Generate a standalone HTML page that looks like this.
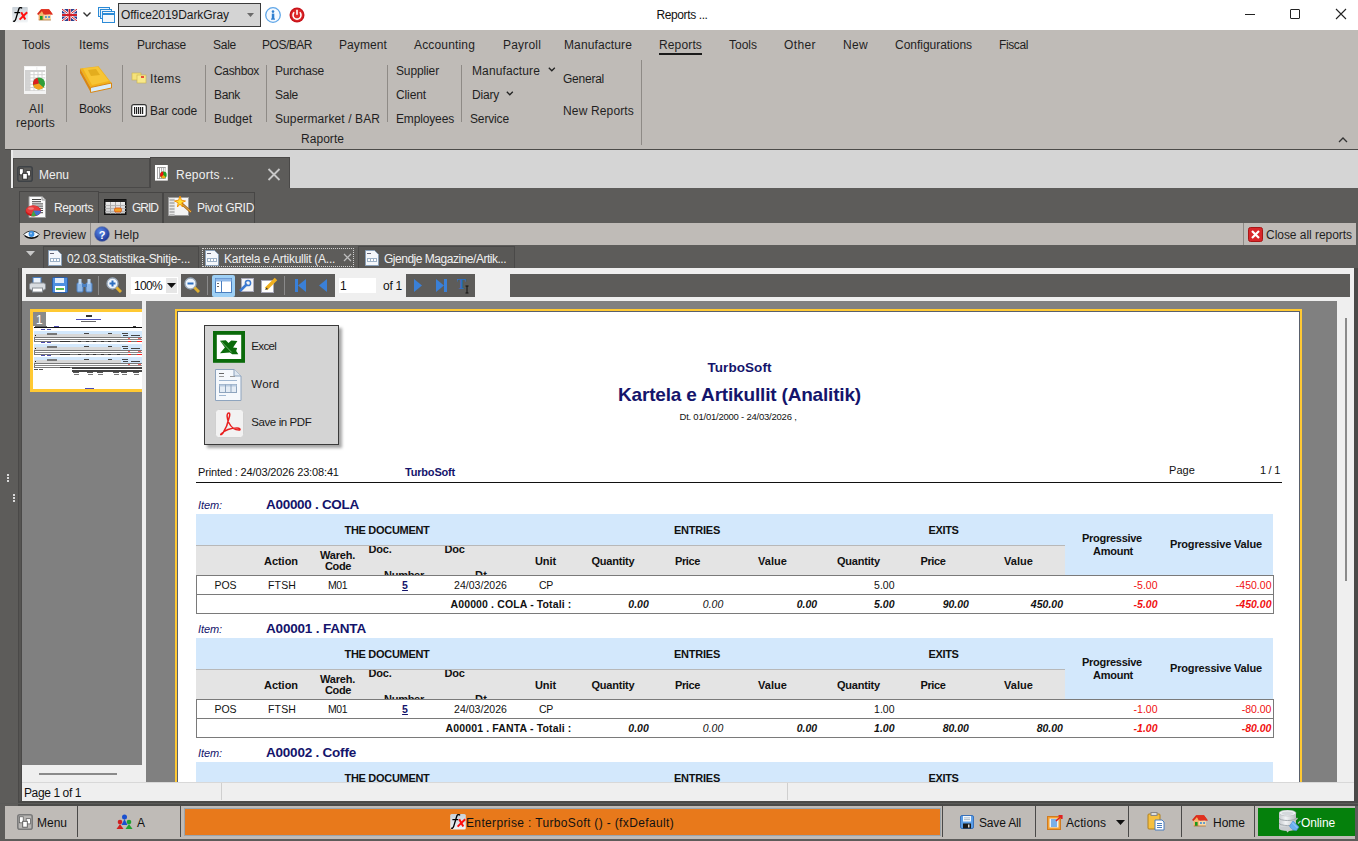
<!DOCTYPE html>
<html><head><meta charset="utf-8">
<style>
*{margin:0;padding:0;box-sizing:border-box}
html,body{width:1358px;height:841px;overflow:hidden}
body{position:relative;background:#5d5c5a;font-family:"Liberation Sans",sans-serif;font-size:12px;color:#1e1e1e}
.a{position:absolute;display:block}
.t{position:absolute;white-space:nowrap}
</style></head><body>

<div class="a" style="left:0px;top:0px;width:1358px;height:30px;background:#fff;"></div>
<svg class="a" style="left:12px;top:7px;" width="16" height="16" viewBox="0 0 16 16"><defs><linearGradient id="fxg" x1="0" y1="0" x2="0" y2="1"><stop offset="0" stop-color="#c9d1d8"/><stop offset="1" stop-color="#f2f5f7"/></linearGradient></defs><rect x="0.2" y="0" width="15.6" height="15.4" rx="1" fill="url(#fxg)"/><path d="M10 1.4 C9.3 0.2 7.6 0.2 6.9 1.8 L3.6 12.6 C3.1 14 2.1 14.6 1.1 14" stroke="#000" stroke-width="1.35" fill="none"/><path d="M2.4 5.6 L8.2 5.6" stroke="#000" stroke-width="1.2"/><path d="M7.6 12.6 L15.2 5.3 M9.2 5.3 L13.3 12.6" stroke="#ff1010" stroke-width="2"/></svg>
<svg class="a" style="left:37px;top:8px;" width="17" height="14" viewBox="0 0 17 14"><path d="M1.5 7.5 L5 1.2 L9 7.5 Z" fill="#f5b060"/><rect x="1.7" y="6.6" width="12.2" height="5.4" fill="#f8d9a8"/><rect x="1.7" y="6.6" width="5" height="5.4" fill="#f0b070"/><rect x="3" y="8" width="2.6" height="4" fill="#1a9a1a"/><rect x="8.2" y="8" width="1.5" height="2" fill="#3a8ad8"/><rect x="11.3" y="8" width="1.5" height="2" fill="#3a8ad8"/><path d="M0 6 L4 1.3 L12 1.3 L16 6.5 L13.5 6.5 L10 2.6 L7 7 L5 3 L1.5 7 Z" fill="#d82a1a"/><path d="M4 1.3 L12 1.3 L15.5 6.3 L8 6.8 Z" fill="#e0301f"/><rect x="1.7" y="11.6" width="12.2" height="0.8" fill="#b07030"/></svg>
<svg class="a" style="left:62px;top:9px;" width="15" height="12" viewBox="0 0 15 12"><rect width="15" height="12" fill="#2b3f8f"/><path d="M0 0 L15 12 M15 0 L0 12" stroke="#fff" stroke-width="2.5"/><path d="M0 0 L15 12 M15 0 L0 12" stroke="#d0202a" stroke-width="1"/><rect x="6" y="0" width="3" height="12" fill="#fff"/><rect x="0" y="4.5" width="15" height="3" fill="#fff"/><rect x="6.5" y="0" width="2" height="12" fill="#d0202a"/><rect x="0" y="5" width="15" height="2" fill="#d0202a"/></svg>
<svg class="a" style="left:82px;top:11px;" width="10" height="7" viewBox="0 0 10 7"><path d="M1.5 1.5 L5 5 L8.5 1.5" stroke="#333" stroke-width="1.4" fill="none"/></svg>
<svg class="a" style="left:98px;top:7px;" width="17" height="16" viewBox="0 0 17 16"><rect x="0.5" y="0.5" width="11" height="9" fill="#eaf3fb" stroke="#2b8ad6"/><rect x="2.5" y="2.5" width="11" height="9" fill="#eaf3fb" stroke="#2b8ad6"/><rect x="4.5" y="4.5" width="12" height="11" fill="#f4f8fc" stroke="#2b8ad6"/><rect x="5" y="6" width="11" height="2" fill="#2b8ad6"/></svg>
<div class="a" style="left:118px;top:3px;width:143px;height:24px;background:#d4d4d4;border:1px solid #3a3a3a;"></div>
<div class="t " style="top:8.84px;font-size:12px;line-height:12px;color:#1a1a1a;letter-spacing:-0.063px;left:121px;">Office2019DarkGray</div>
<svg class="a" style="left:247px;top:13px;" width="8" height="5" viewBox="0 0 8 5"><path d="M0 0 L7 0 L3.5 4 Z" fill="#6a6a6a"/></svg>
<svg class="a" style="left:265px;top:7px;" width="17" height="16" viewBox="0 0 17 16"><circle cx="8" cy="8" r="7.3" fill="#f4f9ff" stroke="#5fa6e8" stroke-width="1.3"/><circle cx="8" cy="4.6" r="1.3" fill="#2f7fd0"/><rect x="6.8" y="6.6" width="2.5" height="5.5" fill="#2f7fd0"/><rect x="6" y="11.5" width="4" height="1.2" fill="#2f7fd0"/></svg>
<svg class="a" style="left:289px;top:7px;" width="17" height="16" viewBox="0 0 17 16"><circle cx="8" cy="8" r="7.5" fill="#c8141c"/><circle cx="8" cy="8" r="6" fill="#de2a2a"/><path d="M5.2 5.3 A4 4 0 1 0 10.8 5.3" stroke="#fff" stroke-width="1.6" fill="none"/><rect x="7.2" y="2.8" width="1.6" height="5" fill="#fff"/></svg>
<div class="t " style="top:8.84px;font-size:12px;line-height:12px;color:#111;letter-spacing:-0.393px;left:656.50px;">Reports ...</div>
<div class="a" style="left:1245px;top:14px;width:10px;height:1px;background:#222;"></div>
<div class="a" style="left:1290px;top:9px;width:10px;height:10px;border:1px solid #222;border-radius:1px;"></div>
<svg class="a" style="left:1335px;top:8px;" width="12" height="12" viewBox="0 0 12 12"><path d="M1 1 L11 11 M11 1 L1 11" stroke="#222" stroke-width="1.1"/></svg>
<div class="a" style="left:5px;top:30px;width:1353px;height:119px;background:#bfbbb7;"></div>
<div class="a" style="left:5px;top:149px;width:1353px;height:1px;background:#4c4b49;"></div>
<div class="t " style="top:38.84px;font-size:12px;line-height:12px;color:#1f1f1f;letter-spacing:-0.003px;left:22px;">Tools</div>
<div class="t " style="top:38.84px;font-size:12px;line-height:12px;color:#1f1f1f;letter-spacing:0.134px;left:79px;">Items</div>
<div class="t " style="top:38.84px;font-size:12px;line-height:12px;color:#1f1f1f;letter-spacing:-0.211px;left:137px;">Purchase</div>
<div class="t " style="top:38.84px;font-size:12px;line-height:12px;color:#1f1f1f;letter-spacing:-0.254px;left:213px;">Sale</div>
<div class="t " style="top:38.84px;font-size:12px;line-height:12px;color:#1f1f1f;letter-spacing:-0.475px;left:262px;">POS/BAR</div>
<div class="t " style="top:38.84px;font-size:12px;line-height:12px;color:#1f1f1f;letter-spacing:0.094px;left:339px;">Payment</div>
<div class="t " style="top:38.84px;font-size:12px;line-height:12px;color:#1f1f1f;letter-spacing:0.164px;left:414px;">Accounting</div>
<div class="t " style="top:38.84px;font-size:12px;line-height:12px;color:#1f1f1f;letter-spacing:0.188px;left:503px;">Payroll</div>
<div class="t " style="top:38.84px;font-size:12px;line-height:12px;color:#1f1f1f;letter-spacing:0.119px;left:564px;">Manufacture</div>
<div class="t " style="top:38.84px;font-size:12px;line-height:12px;color:#1f1f1f;letter-spacing:0.141px;left:659px;">Reports</div>
<div class="t " style="top:38.84px;font-size:12px;line-height:12px;color:#1f1f1f;letter-spacing:-0.003px;left:729px;">Tools</div>
<div class="t " style="top:38.84px;font-size:12px;line-height:12px;color:#1f1f1f;letter-spacing:0.400px;left:784px;">Other</div>
<div class="t " style="top:38.84px;font-size:12px;line-height:12px;color:#1f1f1f;letter-spacing:0.328px;left:843px;">New</div>
<div class="t " style="top:38.84px;font-size:12px;line-height:12px;color:#1f1f1f;letter-spacing:-0.027px;left:895px;">Configurations</div>
<div class="t " style="top:38.84px;font-size:12px;line-height:12px;color:#1f1f1f;letter-spacing:-0.391px;left:999px;">Fiscal</div>
<div class="a" style="left:659px;top:53px;width:43px;height:2px;background:#1a1a1a;"></div>
<div class="a" style="left:66px;top:65px;width:1px;height:57px;background:#8e8a86;"></div>
<div class="a" style="left:122px;top:65px;width:1px;height:57px;background:#8e8a86;"></div>
<div class="a" style="left:205px;top:65px;width:1px;height:57px;background:#8e8a86;"></div>
<div class="a" style="left:266px;top:65px;width:1px;height:57px;background:#8e8a86;"></div>
<div class="a" style="left:387px;top:65px;width:1px;height:57px;background:#8e8a86;"></div>
<div class="a" style="left:461px;top:65px;width:1px;height:57px;background:#8e8a86;"></div>
<div class="a" style="left:641px;top:60px;width:1px;height:85px;background:#8e8a86;"></div>
<svg class="a" style="left:24px;top:66px;" width="23" height="29" viewBox="0 0 23 29"><rect x="0" y="0" width="22" height="28" fill="#f3f3f3"/><rect x="1" y="1" width="11" height="3" fill="#fff"/><rect x="13.5" y="1" width="8" height="3" fill="#fff"/><rect x="1" y="4" width="20" height="21" fill="#d2d2d2"/><rect x="2.5" y="6.0" width="3" height="2.2" fill="#d4d4d4"/><rect x="6.5" y="6.0" width="3" height="2.2" fill="#fff"/><rect x="10.5" y="6.0" width="3" height="2.2" fill="#fff"/><rect x="14.5" y="6.0" width="3" height="2.2" fill="#fff"/><rect x="18.5" y="6.0" width="3" height="2.2" fill="#fff"/><rect x="2.5" y="9.2" width="3" height="2.2" fill="#d4d4d4"/><rect x="6.5" y="9.2" width="3" height="2.2" fill="#fff"/><rect x="10.5" y="9.2" width="3" height="2.2" fill="#fff"/><rect x="14.5" y="9.2" width="3" height="2.2" fill="#fff"/><rect x="18.5" y="9.2" width="3" height="2.2" fill="#fff"/><rect x="2.5" y="12.4" width="3" height="2.2" fill="#d4d4d4"/><rect x="6.5" y="12.4" width="3" height="2.2" fill="#fff"/><rect x="10.5" y="12.4" width="3" height="2.2" fill="#fff"/><rect x="14.5" y="12.4" width="3" height="2.2" fill="#fff"/><rect x="18.5" y="12.4" width="3" height="2.2" fill="#fff"/><rect x="2.5" y="15.600000000000001" width="3" height="2.2" fill="#d4d4d4"/><rect x="6.5" y="15.600000000000001" width="3" height="2.2" fill="#fff"/><rect x="10.5" y="15.600000000000001" width="3" height="2.2" fill="#fff"/><rect x="14.5" y="15.600000000000001" width="3" height="2.2" fill="#fff"/><rect x="18.5" y="15.600000000000001" width="3" height="2.2" fill="#fff"/><rect x="2.5" y="18.8" width="3" height="2.2" fill="#d4d4d4"/><rect x="6.5" y="18.8" width="3" height="2.2" fill="#fff"/><rect x="10.5" y="18.8" width="3" height="2.2" fill="#fff"/><rect x="14.5" y="18.8" width="3" height="2.2" fill="#fff"/><rect x="18.5" y="18.8" width="3" height="2.2" fill="#fff"/><rect x="2.5" y="22.0" width="3" height="2.2" fill="#d4d4d4"/><rect x="6.5" y="22.0" width="3" height="2.2" fill="#fff"/><rect x="10.5" y="22.0" width="3" height="2.2" fill="#fff"/><rect x="14.5" y="22.0" width="3" height="2.2" fill="#fff"/><rect x="18.5" y="22.0" width="3" height="2.2" fill="#fff"/><circle cx="15" cy="17.5" r="6" fill="#2f9e3a"/><path d="M15 17.5 L13.5 11.7 A6 6 0 0 0 9.2 19 Z" fill="#dd2020"/><path d="M15 17.5 L9.2 19 A6 6 0 0 0 19.5 21.5 Z" fill="#f3a21d"/></svg>
<div class="t " style="top:102.84px;font-size:12px;line-height:12px;color:#1f1f1f;letter-spacing:0.552px;left:29px;">All</div>
<div class="t " style="top:116.84px;font-size:12px;line-height:12px;color:#1f1f1f;letter-spacing:0.237px;left:16px;">reports</div>
<svg class="a" style="left:79px;top:66px;" width="34" height="28" viewBox="0 0 34 28"><path d="M1 2.5 L19.5 0.3 L32.5 17 L11.5 21.5 Z" fill="#f2b21c"/><path d="M4 2.5 L19 0.8 L30 15 L13 19 Z" fill="#f7c535"/><path d="M9 4 L17 3 L21 9 L12 10 Z" fill="#e3ad1e"/><path d="M1 2.5 L11.5 21.5 L11.5 26 L1 7 Z" fill="#d98612"/><path d="M11.5 21.5 L32.5 17 L32.5 22 L11.5 26.5 Z" fill="#d8ecfa" stroke="#d98612" stroke-width="1"/></svg>
<div class="t " style="top:102.84px;font-size:12px;line-height:12px;color:#1f1f1f;letter-spacing:-0.269px;left:79px;">Books</div>
<svg class="a" style="left:131px;top:71px;" width="16" height="13" viewBox="0 0 16 13"><rect x="1" y="2" width="9" height="7" fill="#f5e27a" stroke="#c9b24a" stroke-width="0.6"/><rect x="6" y="4" width="9" height="8" fill="#f8e98a" stroke="#c9b24a" stroke-width="0.6"/><rect x="10" y="5" width="3" height="2" fill="#e8503a"/></svg>
<div class="t " style="top:72.84px;font-size:12px;line-height:12px;color:#1f1f1f;letter-spacing:0.334px;left:150px;">Items</div>
<svg class="a" style="left:131px;top:104px;" width="16" height="13" viewBox="0 0 16 13"><rect x="0.7" y="0.7" width="14.6" height="11.6" rx="2" fill="#fff" stroke="#333" stroke-width="1.2"/><rect x="3" y="3" width="1.2" height="7" fill="#222"/><rect x="5" y="3" width="1.2" height="7" fill="#222"/><rect x="7" y="3" width="1.2" height="7" fill="#222"/><rect x="9" y="3" width="1.2" height="7" fill="#222"/><rect x="11" y="3" width="1.2" height="7" fill="#222"/></svg>
<div class="t " style="top:104.84px;font-size:12px;line-height:12px;color:#1f1f1f;letter-spacing:-0.127px;left:150px;">Bar code</div>
<div class="t " style="top:64.84px;font-size:12px;line-height:12px;color:#1f1f1f;letter-spacing:-0.337px;left:214px;">Cashbox</div>
<div class="t " style="top:88.84px;font-size:12px;line-height:12px;color:#1f1f1f;letter-spacing:-0.336px;left:214px;">Bank</div>
<div class="t " style="top:112.84px;font-size:12px;line-height:12px;color:#1f1f1f;letter-spacing:-0.003px;left:214px;">Budget</div>
<div class="t " style="top:64.84px;font-size:12px;line-height:12px;color:#1f1f1f;letter-spacing:-0.211px;left:275px;">Purchase</div>
<div class="t " style="top:88.84px;font-size:12px;line-height:12px;color:#1f1f1f;letter-spacing:-0.254px;left:275px;">Sale</div>
<div class="t " style="top:112.84px;font-size:12px;line-height:12px;color:#1f1f1f;letter-spacing:0.097px;left:275px;">Supermarket / BAR</div>
<div class="t " style="top:132.84px;font-size:12px;line-height:12px;color:#1f1f1f;letter-spacing:0.045px;left:301px;">Raporte</div>
<div class="t " style="top:64.84px;font-size:12px;line-height:12px;color:#1f1f1f;letter-spacing:-0.129px;left:396px;">Supplier</div>
<div class="t " style="top:88.84px;font-size:12px;line-height:12px;color:#1f1f1f;letter-spacing:-0.115px;left:396px;">Client</div>
<div class="t " style="top:112.84px;font-size:12px;line-height:12px;color:#1f1f1f;letter-spacing:-0.151px;left:396px;">Employees</div>
<div class="t " style="top:64.84px;font-size:12px;line-height:12px;color:#1f1f1f;letter-spacing:0.119px;left:472px;">Manufacture</div>
<svg class="a" style="left:548px;top:67px;" width="8" height="5" viewBox="0 0 8 5"><path d="M0.8 0.8 L3.8 3.8 L6.8 0.8" stroke="#222" stroke-width="1.3" fill="none"/></svg>
<div class="t " style="top:88.84px;font-size:12px;line-height:12px;color:#1f1f1f;letter-spacing:-0.203px;left:472px;">Diary</div>
<svg class="a" style="left:506px;top:91px;" width="8" height="5" viewBox="0 0 8 5"><path d="M0.8 0.8 L3.8 3.8 L6.8 0.8" stroke="#222" stroke-width="1.3" fill="none"/></svg>
<div class="t " style="top:112.84px;font-size:12px;line-height:12px;color:#1f1f1f;letter-spacing:-0.145px;left:470px;">Service</div>
<div class="t " style="top:72.84px;font-size:12px;line-height:12px;color:#1f1f1f;letter-spacing:-0.241px;left:563px;">General</div>
<div class="t " style="top:104.84px;font-size:12px;line-height:12px;color:#1f1f1f;letter-spacing:0.149px;left:563px;">New Reports</div>
<svg class="a" style="left:1338px;top:137px;" width="10" height="6" viewBox="0 0 10 6"><path d="M1 5 L5 1 L9 5" stroke="#333" stroke-width="1.3" fill="none"/></svg>
<div class="a" style="left:11px;top:150px;width:1347px;height:38px;background:#d5d5d5;"></div>
<div class="a" style="left:11px;top:150px;width:2px;height:38px;background:#ececec;"></div>
<div class="a" style="left:13px;top:158px;width:137px;height:30px;background:#5d5c5a;border:1px solid #4a4948;border-bottom:none;"></div>
<div class="a" style="left:13px;top:187px;width:137px;height:1px;background:#4a4948;"></div>
<div class="a" style="left:150px;top:157px;width:140px;height:32px;background:#5d5c5a;border:1px solid #4a4948;border-bottom:none;"></div>
<svg class="a" style="left:17px;top:166px;" width="16" height="16" viewBox="0 0 16 16"><rect x="0.8" y="0.8" width="14.4" height="14.4" rx="2" fill="none" stroke="#3e4246" stroke-width="1.6"/><rect x="2.4" y="2.8" width="3.8" height="6" fill="#fff" stroke="#222" stroke-width="0.7"/><rect x="9.2" y="4.7" width="4.2" height="5.2" fill="#fff" stroke="#222" stroke-width="0.7"/><rect x="5.7" y="7.3" width="4.6" height="5.9" fill="#fff" stroke="#222" stroke-width="0.9"/></svg>
<div class="t " style="top:168.84px;font-size:12px;line-height:12px;color:#f0f0f0;letter-spacing:-0.004px;left:39px;">Menu</div>
<svg class="a" style="left:155px;top:165px;" width="13" height="16" viewBox="0 0 13 16"><rect x="0" y="0" width="12.8" height="15.6" fill="#fff"/><rect x="2" y="2" width="8.8" height="12" fill="#a0a0a0"/><rect x="2.9" y="3" width="1.2" height="10.2" fill="#fff"/><rect x="5.0" y="3" width="1.2" height="10.2" fill="#fff"/><rect x="7.1" y="3" width="1.2" height="10.2" fill="#fff"/><rect x="9.200000000000001" y="3" width="1.2" height="10.2" fill="#fff"/><circle cx="8.4" cy="9.9" r="3.3" fill="#22a022"/><path d="M8.4 9.9 L8.2 6.6 A3.3 3.3 0 0 0 6 12.2 Z" fill="#ee1010"/><path d="M8.4 9.9 L6 12.2 A3.3 3.3 0 0 0 10.8 12.2 Z" fill="#f0a818"/></svg>
<div class="t " style="top:168.84px;font-size:12px;line-height:12px;color:#f0f0f0;letter-spacing:0.243px;left:176px;">Reports ...</div>
<svg class="a" style="left:267px;top:168px;" width="14" height="13" viewBox="0 0 14 13"><path d="M1.5 1 L12.5 12 M12.5 1 L1.5 12" stroke="#c8c8c8" stroke-width="1.8"/></svg>
<div class="a" style="left:11px;top:188px;width:1347px;height:615px;background:#5d5c5a;"></div>
<div class="a" style="left:7px;top:474px;width:2px;height:2px;background:#d8d8d8;"></div>
<div class="a" style="left:7px;top:477px;width:2px;height:2px;background:#d8d8d8;"></div>
<div class="a" style="left:7px;top:480px;width:2px;height:2px;background:#d8d8d8;"></div>
<div class="a" style="left:13px;top:494px;width:2px;height:2px;background:#d8d8d8;"></div>
<div class="a" style="left:13px;top:497px;width:2px;height:2px;background:#d8d8d8;"></div>
<div class="a" style="left:13px;top:500px;width:2px;height:2px;background:#d8d8d8;"></div>
<div class="a" style="left:19px;top:191px;width:80px;height:32px;background:#5d5c5a;border:1px solid #474645;border-bottom:none;"></div>
<div class="a" style="left:98px;top:192px;width:65px;height:31px;background:#5d5c5a;border:1px solid #474645;border-bottom:none;"></div>
<div class="a" style="left:163px;top:192px;width:92px;height:31px;background:#5d5c5a;border:1px solid #474645;border-bottom:none;"></div>
<svg class="a" style="left:25px;top:196px;" width="23" height="23" viewBox="0 0 23 23"><path d="M4 0.5 L17 0.5 L20.5 4 L20.5 21.5 L4 21.5 Z" fill="#fafafa" stroke="#9a9a9a"/><path d="M17 0.5 L17 4 L20.5 4" fill="#ddd" stroke="#9a9a9a"/><rect x="7" y="3.0" width="9" height="1" fill="#444"/><rect x="7" y="5.2" width="9" height="1" fill="#444"/><rect x="7" y="7.4" width="11" height="1" fill="#444"/><rect x="7" y="9.600000000000001" width="11" height="1" fill="#444"/><rect x="7" y="11.8" width="11" height="1" fill="#444"/><rect x="7" y="14.0" width="11" height="1" fill="#444"/><rect x="7" y="16.200000000000003" width="11" height="1" fill="#444"/><ellipse cx="8.3" cy="15" rx="7.8" ry="5.4" fill="#c81818"/><ellipse cx="8" cy="14" rx="7" ry="4.4" fill="#e83a3a"/><path d="M8.3 14.5 L16 14.8 A7.8 5.4 0 0 1 11 19.8 Z" fill="#3f6fd0"/><path d="M8.3 14.5 L11 19.8 A7.8 5.4 0 0 1 6 20.2 Z" fill="#3aa646"/><ellipse cx="6" cy="12.5" rx="3" ry="1.3" fill="#f5a0a0" opacity="0.6"/></svg>
<div class="t " style="top:201.84px;font-size:12px;line-height:12px;color:#f0f0f0;letter-spacing:-0.431px;left:54px;">Reports</div>
<svg class="a" style="left:104px;top:199px;" width="23" height="16" viewBox="0 0 23 16"><defs><linearGradient id="gg" x1="0" y1="0" x2="0" y2="1"><stop offset="0" stop-color="#f4f4f4"/><stop offset="1" stop-color="#c8c8c8"/></linearGradient></defs><rect x="0.75" y="0.75" width="21" height="14.5" fill="url(#gg)" stroke="#111" stroke-width="1.5"/><rect x="1" y="1" width="21" height="2" fill="#222"/><rect x="6" y="3" width="0.8" height="12" fill="#999"/><rect x="11" y="3" width="0.8" height="12" fill="#999"/><rect x="16" y="3" width="0.8" height="12" fill="#999"/><rect x="1" y="6" width="21" height="0.8" fill="#aaa"/><rect x="1" y="9" width="21" height="0.8" fill="#aaa"/><rect x="1" y="12" width="21" height="0.8" fill="#aaa"/><rect x="10.5" y="9" width="7" height="4" rx="1.5" fill="#f0a020" stroke="#e04a10" stroke-width="0.8"/></svg>
<div class="t " style="top:201.84px;font-size:12px;line-height:12px;color:#f0f0f0;letter-spacing:-1.000px;left:132px;">GRID</div>
<svg class="a" style="left:168px;top:196px;" width="24" height="20" viewBox="0 0 24 20"><rect x="0.5" y="1.5" width="20" height="18" fill="#e8e8e8" stroke="#9a9a9a"/><rect x="1.5" y="3" width="5" height="2" fill="#b8b8b8"/><rect x="1.5" y="6" width="5" height="2" fill="#b8b8b8"/><rect x="1.5" y="9" width="5" height="2" fill="#b8b8b8"/><rect x="1.5" y="12" width="5" height="2" fill="#b8b8b8"/><rect x="1.5" y="15" width="5" height="2" fill="#b8b8b8"/><rect x="1.5" y="18" width="5" height="2" fill="#b8b8b8"/><rect x="7" y="2" width="13" height="17" fill="#f4f4f4"/><path d="M13 7 L23 16" stroke="#a86a1a" stroke-width="2.4"/><path d="M13 7 L23 16" stroke="#e8b050" stroke-width="1"/><path d="M12 0 L13.4 4.2 L17.5 5 L13.8 6.8 L14.6 11 L12 8.2 L9.4 11 L10.2 6.8 L6.5 5 L10.6 4.2 Z" fill="#ffe030" stroke="#f08a00" stroke-width="0.9"/></svg>
<div class="t " style="top:201.84px;font-size:12px;line-height:12px;color:#f0f0f0;letter-spacing:-0.300px;left:197px;">Pivot GRID</div>
<div class="a" style="left:20px;top:223px;width:1336px;height:22px;background:#bfbbb7;"></div>
<div class="a" style="left:90px;top:223px;width:1px;height:22px;background:#8e8a86;"></div>
<svg class="a" style="left:23px;top:229px;" width="17" height="11" viewBox="0 0 17 11"><path d="M0.8 5.5 C4 1 13 1 16.2 5.5 C13 10 4 10 0.8 5.5 Z" fill="#f4f8fc" stroke="#333" stroke-width="1"/><path d="M2 7 C5 10 12 10 15 7" stroke="#111" stroke-width="1.4" fill="none"/><circle cx="8.5" cy="5" r="2.9" fill="#3a8fe0"/><circle cx="8" cy="4.4" r="1" fill="#a8d0f8"/></svg>
<div class="t " style="top:228.84px;font-size:12px;line-height:12px;color:#1f1f1f;letter-spacing:0.045px;left:43px;">Preview</div>
<svg class="a" style="left:94px;top:226px;" width="16" height="16" viewBox="0 0 16 16"><defs><radialGradient id="hg" cx="0.4" cy="0.35" r="0.7"><stop offset="0" stop-color="#5a8ae8"/><stop offset="1" stop-color="#1a3090"/></radialGradient></defs><circle cx="8" cy="8" r="7.5" fill="url(#hg)" stroke="#7a86a0" stroke-width="0.6"/><text x="8" y="12.5" text-anchor="middle" font-family="Liberation Sans" font-weight="bold" font-size="11" fill="#fff">?</text></svg>
<div class="t " style="top:228.84px;font-size:12px;line-height:12px;color:#1f1f1f;letter-spacing:0.078px;left:114px;">Help</div>
<div class="a" style="left:1243px;top:223px;width:1px;height:22px;background:#8e8a86;"></div>
<svg class="a" style="left:1248px;top:227px;" width="15" height="15" viewBox="0 0 15 15"><rect x="0.5" y="0.5" width="14" height="14" rx="2" fill="#d8262a" stroke="#a81616"/><path d="M4 4 L11 11 M11 4 L4 11" stroke="#fff" stroke-width="2.2"/></svg>
<div class="t " style="top:228.84px;font-size:12px;line-height:12px;color:#1f1f1f;letter-spacing:-0.041px;left:1266px;">Close all reports</div>
<svg class="a" style="left:26px;top:251px;" width="9" height="5" viewBox="0 0 9 5"><path d="M0 0 L9 0 L4.5 5 Z" fill="#c9c9c9"/></svg>
<div class="a" style="left:43px;top:246px;width:156px;height:23px;background:#595856;border:1px solid #4a4948;"></div>
<div class="a" style="left:200px;top:246px;width:156px;height:23px;background:#5d5c5a;"></div>
<div class="a" style="left:202px;top:248px;width:152px;height:19px;border:1px dotted #d0d0d0;"></div>
<div class="a" style="left:358px;top:246px;width:157px;height:23px;background:#595856;border:1px solid #4a4948;"></div>
<svg class="a" style="left:48px;top:250px;" width="14" height="16" viewBox="0 0 14 16"><path d="M0.5 0.5 L9.5 0.5 L13.5 4.5 L13.5 15.5 L0.5 15.5 Z" fill="#f4f7fb" stroke="#8aa0b8"/><rect x="2" y="3" width="4" height="1" fill="#667"/><rect x="2" y="8" width="10" height="4" fill="#9db2c8"/><rect x="3" y="9" width="2" height="2" fill="#fff"/><rect x="6" y="9" width="2" height="2" fill="#fff"/><rect x="9" y="9" width="2" height="2" fill="#fff"/></svg>
<div class="t " style="top:252.84px;font-size:12px;line-height:12px;color:#f0f0f0;letter-spacing:-0.260px;left:67px;">02.03.Statistika-Shitje-...</div>
<svg class="a" style="left:205px;top:250px;" width="14" height="16" viewBox="0 0 14 16"><path d="M0.5 0.5 L9.5 0.5 L13.5 4.5 L13.5 15.5 L0.5 15.5 Z" fill="#f4f7fb" stroke="#8aa0b8"/><rect x="2" y="3" width="4" height="1" fill="#667"/><rect x="2" y="8" width="10" height="4" fill="#9db2c8"/><rect x="3" y="9" width="2" height="2" fill="#fff"/><rect x="6" y="9" width="2" height="2" fill="#fff"/><rect x="9" y="9" width="2" height="2" fill="#fff"/></svg>
<div class="t " style="top:252.84px;font-size:12px;line-height:12px;color:#f0f0f0;letter-spacing:-0.270px;left:224px;">Kartela e Artikullit (A...</div>
<svg class="a" style="left:343px;top:253px;" width="9" height="9" viewBox="0 0 9 9"><path d="M1 1 L8 8 M8 1 L1 8" stroke="#bdbdbd" stroke-width="1.3"/></svg>
<svg class="a" style="left:365px;top:250px;" width="14" height="16" viewBox="0 0 14 16"><path d="M0.5 0.5 L9.5 0.5 L13.5 4.5 L13.5 15.5 L0.5 15.5 Z" fill="#f4f7fb" stroke="#8aa0b8"/><rect x="2" y="3" width="4" height="1" fill="#667"/><rect x="2" y="8" width="10" height="4" fill="#9db2c8"/><rect x="3" y="9" width="2" height="2" fill="#fff"/><rect x="6" y="9" width="2" height="2" fill="#fff"/><rect x="9" y="9" width="2" height="2" fill="#fff"/></svg>
<div class="t " style="top:252.84px;font-size:12px;line-height:12px;color:#f0f0f0;letter-spacing:-0.481px;left:384px;">Gjendje Magazine/Artik...</div>
<div class="a" style="left:18px;top:268px;width:4px;height:535px;background:#4a4948;"></div>
<div class="a" style="left:19px;top:268px;width:2px;height:533px;background:#555452;"></div>
<div class="a" style="left:22px;top:268px;width:1332px;height:532px;background:#efefef;"></div>
<div class="a" style="left:1354px;top:268px;width:4px;height:535px;background:#4a4948;"></div>
<div class="a" style="left:26px;top:274px;width:100px;height:23px;background:#5d5c5a;"></div>
<div class="a" style="left:131px;top:277px;width:47px;height:17px;background:#fff;"></div>
<div class="a" style="left:166px;top:278px;width:11px;height:15px;background:#e6e6e6;"></div>
<svg class="a" style="left:167px;top:283px;" width="9" height="5" viewBox="0 0 9 5"><path d="M0 0 L9 0 L4.5 5 Z" fill="#111"/></svg>
<div class="t " style="top:279.84px;font-size:12px;line-height:12px;color:#111;letter-spacing:-0.672px;left:134px;">100%</div>
<div class="a" style="left:181px;top:274px;width:154px;height:23px;background:#5d5c5a;"></div>
<div class="a" style="left:339px;top:278px;width:37px;height:15px;background:#fff;"></div>
<div class="t " style="top:279.84px;font-size:12px;line-height:12px;color:#111;left:340px;">1</div>
<div class="t " style="top:279.84px;font-size:12px;line-height:12px;color:#111;letter-spacing:-0.250px;left:383px;">of 1</div>
<div class="a" style="left:406px;top:274px;width:69px;height:23px;background:#5d5c5a;"></div>
<div class="a" style="left:510px;top:274px;width:840px;height:23px;background:#5d5c5a;"></div>
<div class="a" style="left:98px;top:276px;width:1px;height:19px;background:#8a8a8a;"></div>
<div class="a" style="left:207px;top:276px;width:1px;height:19px;background:#8a8a8a;"></div>
<div class="a" style="left:284px;top:276px;width:1px;height:19px;background:#8a8a8a;"></div>
<div class="a" style="left:212px;top:275px;width:23px;height:22px;background:#9ed0f5;border-radius:2px;"></div>
<svg class="a" style="left:29px;top:277px;" width="17" height="16" viewBox="0 0 17 16"><rect x="4" y="0.5" width="8" height="6" fill="#eaf2fb" stroke="#4a7fc0"/><rect x="0.5" y="6" width="16" height="7" rx="2" fill="#d8dce0" stroke="#8a9096"/><rect x="3.5" y="11" width="10" height="4" fill="#fff" stroke="#8a9096"/></svg>
<svg class="a" style="left:52px;top:277px;" width="16" height="16" viewBox="0 0 16 16"><rect x="0.5" y="0.5" width="15" height="15" rx="1" fill="#4d8fe0" stroke="#2d5fa8"/><rect x="3" y="1" width="9" height="5" fill="#dfeaf8"/><rect x="3" y="9" width="10" height="6" fill="#fff"/><rect x="4" y="11" width="8" height="2" fill="#5aba4a"/></svg>
<svg class="a" style="left:76px;top:278px;" width="17" height="15" viewBox="0 0 17 15"><rect x="1" y="5" width="6" height="9" rx="1" fill="#8fb8e8" stroke="#4a7fc0"/><rect x="10" y="5" width="6" height="9" rx="1" fill="#8fb8e8" stroke="#4a7fc0"/><rect x="2.5" y="1" width="3" height="5" fill="#bcd6f2"/><rect x="11.5" y="1" width="3" height="5" fill="#bcd6f2"/><rect x="6" y="6" width="5" height="3" fill="#4a7fc0"/></svg>
<svg class="a" style="left:106px;top:277px;" width="16" height="16" viewBox="0 0 16 16"><circle cx="6.5" cy="6.5" r="5.5" fill="#eef5fc" stroke="#9aaabb" stroke-width="1.3"/><path d="M10.5 10.5 L15 15" stroke="#e0b030" stroke-width="3"/><rect x="3.5" y="5.5" width="6" height="2" fill="#2d6fc0"/><rect x="5.5" y="3.5" width="2" height="6" fill="#2d6fc0"/></svg>
<svg class="a" style="left:184px;top:277px;" width="16" height="16" viewBox="0 0 16 16"><circle cx="6.5" cy="6.5" r="5.5" fill="#eef5fc" stroke="#9aaabb" stroke-width="1.3"/><path d="M10.5 10.5 L15 15" stroke="#e0b030" stroke-width="3"/><rect x="3.5" y="5.5" width="6" height="2" fill="#2d6fc0"/></svg>
<svg class="a" style="left:215px;top:278px;" width="17" height="15" viewBox="0 0 17 15"><rect x="0.5" y="0.5" width="16" height="14" fill="#fff" stroke="#4a7fc0"/><rect x="0.5" y="0.5" width="16" height="3" fill="#8fb8e8"/><rect x="6" y="3" width="1" height="12" fill="#4a7fc0"/><rect x="2" y="5" width="2" height="1" fill="#666"/><rect x="2" y="8" width="2" height="1" fill="#666"/></svg>
<svg class="a" style="left:238px;top:277px;" width="16" height="16" viewBox="0 0 16 16"><rect x="3.5" y="1.5" width="12" height="13" fill="#f4f4f4" stroke="#aab"/><path d="M2 14 L9 7" stroke="#3a78d0" stroke-width="2.5"/><circle cx="10" cy="6" r="2.6" fill="none" stroke="#3a78d0" stroke-width="1.5"/></svg>
<svg class="a" style="left:261px;top:277px;" width="17" height="16" viewBox="0 0 17 16"><rect x="0.5" y="3.5" width="12" height="12" fill="#fff" stroke="#aab"/><path d="M5 12 L15 2" stroke="#f0b020" stroke-width="3.5"/><path d="M4 13 L5.5 10.5 L7 12 Z" fill="#333"/></svg>
<svg class="a" style="left:295px;top:278px;" width="12" height="15" viewBox="0 0 12 15"><rect x="0" y="1" width="3" height="13" fill="#3a80d8"/><path d="M11 1 L3 7.5 L11 14 Z" fill="#3a80d8"/></svg>
<svg class="a" style="left:318px;top:278px;" width="10" height="15" viewBox="0 0 10 15"><path d="M9 1 L1 7.5 L9 14 Z" fill="#3a80d8"/></svg>
<svg class="a" style="left:413px;top:278px;" width="10" height="15" viewBox="0 0 10 15"><path d="M1 1 L9 7.5 L1 14 Z" fill="#3a80d8"/></svg>
<svg class="a" style="left:435px;top:278px;" width="12" height="15" viewBox="0 0 12 15"><path d="M1 1 L9 7.5 L1 14 Z" fill="#3a80d8"/><rect x="9" y="1" width="3" height="13" fill="#3a80d8"/></svg>
<svg class="a" style="left:457px;top:277px;" width="14" height="17" viewBox="0 0 14 17"><text x="0" y="12" font-family="Liberation Serif" font-weight="bold" font-size="14" fill="#2d6fc0">T</text><path d="M10 9 L10 16 M8.5 9 L11.5 9 M8.5 16 L11.5 16" stroke="#111" stroke-width="1"/></svg>
<div class="a" style="left:22px;top:301px;width:120px;height:464px;background:#808080;"></div>
<div class="a" style="left:142px;top:301px;width:4px;height:481px;background:#efefef;"></div>
<div class="a" style="left:39px;top:773px;width:78px;height:2px;background:#8a8a8a;"></div>
<div class="a" style="left:146px;top:301px;width:1191px;height:481px;background:#808080;"></div>
<div class="a" style="left:1345px;top:318px;width:2px;height:263px;background:#8a8a8a;"></div>
<!--PAGE-->
<div class="a" style="left:146px;top:301px;width:1191px;height:481px;overflow:hidden"><div class="a" style="left:-146px;top:-301px;width:1358px;height:841px">
<div class="a" style="left:175px;top:309px;width:1127px;height:480px;background:#ffc933;"></div>
<div class="a" style="left:177px;top:311px;width:1123px;height:480px;background:#59606c;"></div>
<div class="a" style="left:178px;top:312px;width:1121px;height:480px;background:#fff;"></div>
<div class="t " style="top:360.57px;font-size:13.5px;line-height:13.5px;color:#14146b;font-weight:bold;letter-spacing:0.056px;left:707.50px;">TurboSoft</div>
<div class="t " style="top:384.62px;font-size:19px;line-height:19px;color:#14146b;font-weight:bold;letter-spacing:-0.176px;left:618.00px;">Kartela e Artikullit (Analitik)</div>
<div class="t " style="top:411.96px;font-size:9.5px;line-height:9.5px;color:#111;letter-spacing:-0.226px;left:679.50px;">Dt. 01/01/2000 - 24/03/2026 ,</div>
<div class="t " style="top:466.69px;font-size:11px;line-height:11px;color:#111;letter-spacing:-0.142px;left:198px;">Printed : 24/03/2026 23:08:41</div>
<div class="t " style="top:466.69px;font-size:11px;line-height:11px;color:#14146b;font-weight:bold;letter-spacing:-0.191px;left:405px;">TurboSoft</div>
<div class="t " style="top:465.19px;font-size:11px;line-height:11px;color:#111;letter-spacing:0.070px;left:1169px;">Page</div>
<div class="t " style="top:465.19px;font-size:11px;line-height:11px;color:#111;letter-spacing:-0.287px;left:1260px;">1 / 1</div>
<div class="a" style="left:196px;top:482px;width:1086px;height:1px;background:#111;"></div>
<div class="t " style="top:499.69px;font-size:11px;line-height:11px;color:#14146b;font-style:italic;letter-spacing:-0.094px;left:198px;">Item:</div>
<div class="t " style="top:497.57px;font-size:13.5px;line-height:13.5px;color:#14146b;font-weight:bold;letter-spacing:-0.294px;left:266px;">A00000 . COLA</div>
<div class="a" style="left:196px;top:514px;width:1077px;height:61px;background:#d3e8fc;"></div>
<div class="a" style="left:196px;top:545px;width:869px;height:30px;background:#e4e4e4;border-top:1px solid #b8b8b8;"></div>
<div class="t " style="top:524.69px;font-size:11px;line-height:11px;color:#111;font-weight:bold;letter-spacing:-0.299px;left:344.50px;">THE DOCUMENT</div>
<div class="t " style="top:524.69px;font-size:11px;line-height:11px;color:#111;font-weight:bold;letter-spacing:-0.241px;left:674.00px;">ENTRIES</div>
<div class="t " style="top:524.69px;font-size:11px;line-height:11px;color:#111;font-weight:bold;letter-spacing:-0.362px;left:928.50px;">EXITS</div>
<div class="t " style="top:533.39px;font-size:11px;line-height:11px;color:#111;font-weight:bold;letter-spacing:-0.276px;left:1082.00px;">Progressive</div>
<div class="t " style="top:545.69px;font-size:11px;line-height:11px;color:#111;font-weight:bold;letter-spacing:-0.255px;left:1093.00px;">Amount</div>
<div class="t " style="top:539.19px;font-size:11px;line-height:11px;color:#111;font-weight:bold;letter-spacing:-0.168px;left:1170.00px;">Progressive Value</div>
<div class="a" style="left:196px;top:546px;width:869px;height:29px;overflow:hidden"><div class="a" style="left:-196px;top:-546px;width:1358px;height:841px">
<div class="t " style="top:555.89px;font-size:11px;line-height:11px;color:#111;font-weight:bold;letter-spacing:-0.036px;left:264.00px;">Action</div>
<div class="t " style="top:549.69px;font-size:11px;line-height:11px;color:#111;font-weight:bold;letter-spacing:-0.214px;left:320.00px;">Wareh.</div>
<div class="t " style="top:561.39px;font-size:11px;line-height:11px;color:#111;font-weight:bold;letter-spacing:-0.375px;left:325.00px;">Code</div>
<div class="t " style="top:543.69px;font-size:11px;line-height:11px;color:#111;font-weight:bold;letter-spacing:-0.211px;left:368.5px;">Doc.</div>
<div class="t " style="top:569.69px;font-size:11px;line-height:11px;color:#111;font-weight:bold;letter-spacing:-0.260px;left:384px;">Number</div>
<div class="t " style="top:543.69px;font-size:11px;line-height:11px;color:#111;font-weight:bold;letter-spacing:-0.260px;left:444.5px;">Doc</div>
<div class="t " style="top:569.69px;font-size:11px;line-height:11px;color:#111;font-weight:bold;letter-spacing:0.203px;left:475px;">Dt</div>
<div class="t " style="top:556.19px;font-size:11px;line-height:11px;color:#111;font-weight:bold;letter-spacing:-0.094px;left:535.00px;">Unit</div>
<div class="t " style="top:555.89px;font-size:11px;line-height:11px;color:#111;font-weight:bold;letter-spacing:-0.203px;left:591.5px;">Quantity</div>
<div class="t " style="top:555.89px;font-size:11px;line-height:11px;color:#111;font-weight:bold;letter-spacing:-0.388px;left:675px;">Price</div>
<div class="t " style="top:555.89px;font-size:11px;line-height:11px;color:#111;font-weight:bold;letter-spacing:0.047px;left:758px;">Value</div>
<div class="t " style="top:555.89px;font-size:11px;line-height:11px;color:#111;font-weight:bold;letter-spacing:-0.203px;left:837px;">Quantity</div>
<div class="t " style="top:555.89px;font-size:11px;line-height:11px;color:#111;font-weight:bold;letter-spacing:-0.388px;left:920.5px;">Price</div>
<div class="t " style="top:555.89px;font-size:11px;line-height:11px;color:#111;font-weight:bold;letter-spacing:0.047px;left:1004px;">Value</div>
</div></div>
<div class="a" style="left:196px;top:575px;width:1078px;height:39px;background:#fff;border:1px solid #7a7a7a;"></div>
<div class="a" style="left:197px;top:594px;width:1076px;height:1px;background:#7a7a7a;"></div>
<div class="t " style="top:580.11px;font-size:10.5px;line-height:10.5px;color:#111;letter-spacing:-0.057px;left:214.50px;">POS</div>
<div class="t " style="top:580.11px;font-size:10.5px;line-height:10.5px;color:#111;letter-spacing:0.152px;left:268.00px;">FTSH</div>
<div class="t " style="top:580.11px;font-size:10.5px;line-height:10.5px;color:#111;letter-spacing:-0.479px;left:328.00px;">M01</div>
<div class="t " style="top:580.11px;font-size:10.5px;line-height:10.5px;color:#14146b;font-weight:bold;left:402.08px;text-decoration:underline;">5</div>
<div class="t " style="top:580.11px;font-size:10.5px;line-height:10.5px;color:#111;letter-spacing:0.041px;left:454.00px;">24/03/2026</div>
<div class="t " style="top:580.11px;font-size:10.5px;line-height:10.5px;color:#111;letter-spacing:-0.289px;left:539.00px;">CP</div>
<div class="t " style="top:580.11px;font-size:10.5px;line-height:10.5px;color:#111;left:874.05px;">5.00</div>
<div class="t " style="top:580.11px;font-size:10.5px;line-height:10.5px;color:#f01010;left:1133.55px;">-5.00</div>
<div class="t " style="top:580.11px;font-size:10.5px;line-height:10.5px;color:#f01010;left:1235.86px;">-450.00</div>
<div class="t " style="top:598.61px;font-size:10.5px;line-height:10.5px;color:#111;font-weight:bold;letter-spacing:0.130px;left:450.50px;">A00000 . COLA - Totali :</div>
<div class="t " style="top:598.61px;font-size:10.5px;line-height:10.5px;color:#111;font-weight:bold;font-style:italic;left:628.35px;">0.00</div>
<div class="t " style="top:598.61px;font-size:10.5px;line-height:10.5px;color:#111;font-style:italic;left:702.85px;">0.00</div>
<div class="t " style="top:598.61px;font-size:10.5px;line-height:10.5px;color:#111;font-weight:bold;font-style:italic;left:796.75px;">0.00</div>
<div class="t " style="top:598.61px;font-size:10.5px;line-height:10.5px;color:#111;font-weight:bold;font-style:italic;left:874.05px;">5.00</div>
<div class="t " style="top:598.61px;font-size:10.5px;line-height:10.5px;color:#111;font-weight:bold;font-style:italic;left:942.70px;">90.00</div>
<div class="t " style="top:598.61px;font-size:10.5px;line-height:10.5px;color:#111;font-weight:bold;font-style:italic;left:1030.86px;">450.00</div>
<div class="t " style="top:598.61px;font-size:10.5px;line-height:10.5px;color:#f01010;font-weight:bold;font-style:italic;left:1133.55px;">-5.00</div>
<div class="t " style="top:598.61px;font-size:10.5px;line-height:10.5px;color:#f01010;font-weight:bold;font-style:italic;left:1235.86px;">-450.00</div>
<div class="t " style="top:623.69px;font-size:11px;line-height:11px;color:#14146b;font-style:italic;letter-spacing:-0.094px;left:198px;">Item:</div>
<div class="t " style="top:621.57px;font-size:13.5px;line-height:13.5px;color:#14146b;font-weight:bold;letter-spacing:-0.184px;left:266px;">A00001 . FANTA</div>
<div class="a" style="left:196px;top:638px;width:1077px;height:61px;background:#d3e8fc;"></div>
<div class="a" style="left:196px;top:669px;width:869px;height:30px;background:#e4e4e4;border-top:1px solid #b8b8b8;"></div>
<div class="t " style="top:648.69px;font-size:11px;line-height:11px;color:#111;font-weight:bold;letter-spacing:-0.299px;left:344.50px;">THE DOCUMENT</div>
<div class="t " style="top:648.69px;font-size:11px;line-height:11px;color:#111;font-weight:bold;letter-spacing:-0.241px;left:674.00px;">ENTRIES</div>
<div class="t " style="top:648.69px;font-size:11px;line-height:11px;color:#111;font-weight:bold;letter-spacing:-0.362px;left:928.50px;">EXITS</div>
<div class="t " style="top:657.39px;font-size:11px;line-height:11px;color:#111;font-weight:bold;letter-spacing:-0.276px;left:1082.00px;">Progressive</div>
<div class="t " style="top:669.69px;font-size:11px;line-height:11px;color:#111;font-weight:bold;letter-spacing:-0.255px;left:1093.00px;">Amount</div>
<div class="t " style="top:663.19px;font-size:11px;line-height:11px;color:#111;font-weight:bold;letter-spacing:-0.168px;left:1170.00px;">Progressive Value</div>
<div class="a" style="left:196px;top:670px;width:869px;height:29px;overflow:hidden"><div class="a" style="left:-196px;top:-670px;width:1358px;height:841px">
<div class="t " style="top:679.89px;font-size:11px;line-height:11px;color:#111;font-weight:bold;letter-spacing:-0.036px;left:264.00px;">Action</div>
<div class="t " style="top:673.69px;font-size:11px;line-height:11px;color:#111;font-weight:bold;letter-spacing:-0.214px;left:320.00px;">Wareh.</div>
<div class="t " style="top:685.39px;font-size:11px;line-height:11px;color:#111;font-weight:bold;letter-spacing:-0.375px;left:325.00px;">Code</div>
<div class="t " style="top:667.69px;font-size:11px;line-height:11px;color:#111;font-weight:bold;letter-spacing:-0.211px;left:368.5px;">Doc.</div>
<div class="t " style="top:693.69px;font-size:11px;line-height:11px;color:#111;font-weight:bold;letter-spacing:-0.260px;left:384px;">Number</div>
<div class="t " style="top:667.69px;font-size:11px;line-height:11px;color:#111;font-weight:bold;letter-spacing:-0.260px;left:444.5px;">Doc</div>
<div class="t " style="top:693.69px;font-size:11px;line-height:11px;color:#111;font-weight:bold;letter-spacing:0.203px;left:475px;">Dt</div>
<div class="t " style="top:680.19px;font-size:11px;line-height:11px;color:#111;font-weight:bold;letter-spacing:-0.094px;left:535.00px;">Unit</div>
<div class="t " style="top:679.89px;font-size:11px;line-height:11px;color:#111;font-weight:bold;letter-spacing:-0.203px;left:591.5px;">Quantity</div>
<div class="t " style="top:679.89px;font-size:11px;line-height:11px;color:#111;font-weight:bold;letter-spacing:-0.388px;left:675px;">Price</div>
<div class="t " style="top:679.89px;font-size:11px;line-height:11px;color:#111;font-weight:bold;letter-spacing:0.047px;left:758px;">Value</div>
<div class="t " style="top:679.89px;font-size:11px;line-height:11px;color:#111;font-weight:bold;letter-spacing:-0.203px;left:837px;">Quantity</div>
<div class="t " style="top:679.89px;font-size:11px;line-height:11px;color:#111;font-weight:bold;letter-spacing:-0.388px;left:920.5px;">Price</div>
<div class="t " style="top:679.89px;font-size:11px;line-height:11px;color:#111;font-weight:bold;letter-spacing:0.047px;left:1004px;">Value</div>
</div></div>
<div class="a" style="left:196px;top:699px;width:1078px;height:39px;background:#fff;border:1px solid #7a7a7a;"></div>
<div class="a" style="left:197px;top:718px;width:1076px;height:1px;background:#7a7a7a;"></div>
<div class="t " style="top:704.11px;font-size:10.5px;line-height:10.5px;color:#111;letter-spacing:-0.057px;left:214.50px;">POS</div>
<div class="t " style="top:704.11px;font-size:10.5px;line-height:10.5px;color:#111;letter-spacing:0.152px;left:268.00px;">FTSH</div>
<div class="t " style="top:704.11px;font-size:10.5px;line-height:10.5px;color:#111;letter-spacing:-0.479px;left:328.00px;">M01</div>
<div class="t " style="top:704.11px;font-size:10.5px;line-height:10.5px;color:#14146b;font-weight:bold;left:402.08px;text-decoration:underline;">5</div>
<div class="t " style="top:704.11px;font-size:10.5px;line-height:10.5px;color:#111;letter-spacing:0.041px;left:454.00px;">24/03/2026</div>
<div class="t " style="top:704.11px;font-size:10.5px;line-height:10.5px;color:#111;letter-spacing:-0.289px;left:539.00px;">CP</div>
<div class="t " style="top:704.11px;font-size:10.5px;line-height:10.5px;color:#111;left:874.05px;">1.00</div>
<div class="t " style="top:704.11px;font-size:10.5px;line-height:10.5px;color:#f01010;left:1133.55px;">-1.00</div>
<div class="t " style="top:704.11px;font-size:10.5px;line-height:10.5px;color:#f01010;left:1241.70px;">-80.00</div>
<div class="t " style="top:722.61px;font-size:10.5px;line-height:10.5px;color:#111;font-weight:bold;letter-spacing:0.146px;left:445.50px;">A00001 . FANTA - Totali :</div>
<div class="t " style="top:722.61px;font-size:10.5px;line-height:10.5px;color:#111;font-weight:bold;font-style:italic;left:628.35px;">0.00</div>
<div class="t " style="top:722.61px;font-size:10.5px;line-height:10.5px;color:#111;font-style:italic;left:702.85px;">0.00</div>
<div class="t " style="top:722.61px;font-size:10.5px;line-height:10.5px;color:#111;font-weight:bold;font-style:italic;left:796.75px;">0.00</div>
<div class="t " style="top:722.61px;font-size:10.5px;line-height:10.5px;color:#111;font-weight:bold;font-style:italic;left:874.05px;">1.00</div>
<div class="t " style="top:722.61px;font-size:10.5px;line-height:10.5px;color:#111;font-weight:bold;font-style:italic;left:942.70px;">80.00</div>
<div class="t " style="top:722.61px;font-size:10.5px;line-height:10.5px;color:#111;font-weight:bold;font-style:italic;left:1036.70px;">80.00</div>
<div class="t " style="top:722.61px;font-size:10.5px;line-height:10.5px;color:#f01010;font-weight:bold;font-style:italic;left:1133.55px;">-1.00</div>
<div class="t " style="top:722.61px;font-size:10.5px;line-height:10.5px;color:#f01010;font-weight:bold;font-style:italic;left:1241.70px;">-80.00</div>
<div class="t " style="top:747.69px;font-size:11px;line-height:11px;color:#14146b;font-style:italic;letter-spacing:-0.094px;left:198px;">Item:</div>
<div class="t " style="top:745.57px;font-size:13.5px;line-height:13.5px;color:#14146b;font-weight:bold;letter-spacing:-0.221px;left:266px;">A00002 . Coffe</div>
<div class="a" style="left:196px;top:762px;width:1077px;height:61px;background:#d3e8fc;"></div>
<div class="t " style="top:772.69px;font-size:11px;line-height:11px;color:#111;font-weight:bold;letter-spacing:-0.299px;left:344.50px;">THE DOCUMENT</div>
<div class="t " style="top:772.69px;font-size:11px;line-height:11px;color:#111;font-weight:bold;letter-spacing:-0.241px;left:674.00px;">ENTRIES</div>
<div class="t " style="top:772.69px;font-size:11px;line-height:11px;color:#111;font-weight:bold;letter-spacing:-0.362px;left:928.50px;">EXITS</div>
<div class="a" style="left:207px;top:328px;width:135px;height:120px;background:rgba(0,0,0,0.35);filter:blur(1.5px);"></div>
<div class="a" style="left:204px;top:325px;width:135px;height:120px;background:#d4d4d4;border:1px solid #3a3a3a;"></div>
<svg class="a" style="left:213px;top:331px;" width="33" height="32" viewBox="0 0 33 32"><rect x="1.9" y="1.9" width="28.2" height="28" fill="#fff" stroke="#0a6a0a" stroke-width="3.8"/><path d="M7 9.7 L12.8 9.2 L15.5 11.9 L18.3 9.4 L24.4 9.9 L20.1 16.5 L24.1 16.9 L23.2 20.1 L25.3 23.2 L19.2 23.2 L16.9 21.4 L7 22.3 L11.9 16.5 Z" fill="#0a6a0a"/><path d="M8.3 10.6 L18.7 21.4" stroke="#9ad09a" stroke-width="0.7"/></svg>
<div class="t " style="top:341.27px;font-size:11.5px;line-height:11.5px;color:#1a1a1a;letter-spacing:-0.625px;left:251.3px;">Excel</div>
<svg class="a" style="left:215px;top:369px;" width="27" height="32" viewBox="0 0 27 32"><path d="M0.5 0.5 L19 0.5 L26 7 L26 31.5 L0.5 31.5 Z" fill="#f5f8fc" stroke="#8ea4be"/><path d="M19 0.5 L19 7 L26 7" fill="#dfe7f0" stroke="#8ea4be"/><rect x="4" y="4" width="5" height="1" fill="#666"/><rect x="4" y="7" width="5" height="1" fill="#999"/><rect x="15" y="7" width="5" height="1" fill="#999"/><rect x="4" y="11" width="18" height="1" fill="#9fb6d0"/><rect x="4.5" y="15.5" width="17" height="8" fill="#e4ecf5" stroke="#8ea4be"/><rect x="4.5" y="15.5" width="17" height="2" fill="#b9cbe0"/><rect x="10" y="15.5" width="1" height="8" fill="#8ea4be"/><rect x="15.5" y="15.5" width="1" height="8" fill="#8ea4be"/><rect x="4" y="26" width="7" height="1" fill="#9fb6d0"/></svg>
<div class="t " style="top:378.77px;font-size:11.5px;line-height:11.5px;color:#1a1a1a;letter-spacing:0.184px;left:251.3px;">Word</div>
<svg class="a" style="left:215px;top:409px;" width="29" height="29" viewBox="0 0 29 29"><rect x="0.5" y="0.5" width="28" height="28" rx="3" fill="#f2f2f2" stroke="#d0d0d0"/><path d="M14 4 C11 4 12 10 14 14 C16 18 20 21 24 21 C26 21 25 19 22 19 C17 19 10 21 6 25 C5 26 7 26 8 24 C10 21 13 14 14 9 C15 6 15 4 14 4" fill="none" stroke="#e82020" stroke-width="1.5"/></svg>
<div class="t " style="top:416.87px;font-size:11.5px;line-height:11.5px;color:#1a1a1a;letter-spacing:-0.413px;left:251.3px;">Save in PDF</div>
</div></div>
<div class="a" style="left:30px;top:309px;width:112px;height:83px;background:#ffc933;"></div>
<div class="a" style="left:33px;top:312px;width:109px;height:77px;background:#fff;"></div>
<div class="a" style="left:33px;top:312px;width:13px;height:14px;background:#8a8a8a;"></div>
<div class="t " style="top:313.84px;font-size:12px;line-height:12px;color:#fff;left:36px;">1</div>
<div class="a" style="left:86px;top:315px;width:6px;height:2px;background:#333;"></div>
<div class="a" style="left:76px;top:319px;width:25px;height:1px;background:#4a4ab8;"></div>
<div class="a" style="left:81px;top:321px;width:15px;height:1px;background:#666;"></div>
<div class="a" style="left:34px;top:327px;width:108px;height:1px;background:#111;"></div>
<div class="a" style="left:35px;top:326px;width:12px;height:1px;background:#666;"></div>
<div class="a" style="left:54px;top:326px;width:5px;height:1px;background:#4a4ab0;"></div>
<div class="a" style="left:133px;top:326px;width:3px;height:1px;background:#333;"></div>
<div class="a" style="left:41px;top:329px;width:4px;height:1px;background:#4a4ab0;"></div>
<div class="a" style="left:47px;top:329px;width:4px;height:1px;background:#4a4ab0;"></div>
<div class="a" style="left:34px;top:331px;width:108px;height:6px;background:#d3e8fc;"></div>
<div class="a" style="left:34px;top:334px;width:87px;height:3px;background:#d8d8d8;"></div>
<div class="a" style="left:34px;top:337px;width:108px;height:5px;background:#fff;border:1px solid #777;border-right:none;"></div>
<div class="a" style="left:34px;top:339px;width:108px;height:1px;background:#888;"></div>
<div class="a" style="left:35px;top:335px;width:1px;height:1px;background:#111;"></div>
<div class="a" style="left:47px;top:333px;width:10px;height:2px;background:#777;"></div>
<div class="a" style="left:84px;top:333px;width:5px;height:1px;background:#444;"></div>
<div class="a" style="left:108px;top:333px;width:4px;height:1px;background:#444;"></div>
<div class="a" style="left:122px;top:333px;width:6px;height:1px;background:#444;"></div>
<div class="a" style="left:123px;top:335px;width:5px;height:1px;background:#444;"></div>
<div class="a" style="left:131px;top:335px;width:9px;height:1px;background:#444;"></div>
<div class="a" style="left:60px;top:341px;width:10px;height:1px;background:#333;"></div>
<div class="a" style="left:78px;top:341px;width:3px;height:1px;background:#333;"></div>
<div class="a" style="left:86px;top:341px;width:3px;height:1px;background:#333;"></div>
<div class="a" style="left:93px;top:341px;width:3px;height:1px;background:#333;"></div>
<div class="a" style="left:101px;top:341px;width:3px;height:1px;background:#333;"></div>
<div class="a" style="left:108px;top:341px;width:3px;height:1px;background:#333;"></div>
<div class="a" style="left:117px;top:341px;width:3px;height:1px;background:#333;"></div>
<div class="a" style="left:128px;top:341px;width:3px;height:1px;background:#f22;"></div>
<div class="a" style="left:137px;top:341px;width:5px;height:1px;background:#f22;"></div>
<div class="a" style="left:128px;top:338px;width:2px;height:1px;background:#f66;"></div>
<div class="a" style="left:138px;top:338px;width:3px;height:1px;background:#f66;"></div>
<div class="a" style="left:41px;top:342px;width:4px;height:1px;background:#4a4ab0;"></div>
<div class="a" style="left:47px;top:342px;width:4px;height:1px;background:#4a4ab0;"></div>
<div class="a" style="left:34px;top:344px;width:108px;height:6px;background:#d3e8fc;"></div>
<div class="a" style="left:34px;top:347px;width:87px;height:3px;background:#d8d8d8;"></div>
<div class="a" style="left:34px;top:350px;width:108px;height:5px;background:#fff;border:1px solid #777;border-right:none;"></div>
<div class="a" style="left:34px;top:352px;width:108px;height:1px;background:#888;"></div>
<div class="a" style="left:35px;top:348px;width:1px;height:1px;background:#111;"></div>
<div class="a" style="left:47px;top:346px;width:10px;height:2px;background:#777;"></div>
<div class="a" style="left:84px;top:346px;width:5px;height:1px;background:#444;"></div>
<div class="a" style="left:108px;top:346px;width:4px;height:1px;background:#444;"></div>
<div class="a" style="left:122px;top:346px;width:6px;height:1px;background:#444;"></div>
<div class="a" style="left:123px;top:348px;width:5px;height:1px;background:#444;"></div>
<div class="a" style="left:131px;top:348px;width:9px;height:1px;background:#444;"></div>
<div class="a" style="left:60px;top:354px;width:10px;height:1px;background:#333;"></div>
<div class="a" style="left:78px;top:354px;width:3px;height:1px;background:#333;"></div>
<div class="a" style="left:86px;top:354px;width:3px;height:1px;background:#333;"></div>
<div class="a" style="left:93px;top:354px;width:3px;height:1px;background:#333;"></div>
<div class="a" style="left:101px;top:354px;width:3px;height:1px;background:#333;"></div>
<div class="a" style="left:108px;top:354px;width:3px;height:1px;background:#333;"></div>
<div class="a" style="left:117px;top:354px;width:3px;height:1px;background:#333;"></div>
<div class="a" style="left:128px;top:354px;width:3px;height:1px;background:#f22;"></div>
<div class="a" style="left:137px;top:354px;width:5px;height:1px;background:#f22;"></div>
<div class="a" style="left:128px;top:351px;width:2px;height:1px;background:#f66;"></div>
<div class="a" style="left:138px;top:351px;width:3px;height:1px;background:#f66;"></div>
<div class="a" style="left:41px;top:355px;width:4px;height:1px;background:#4a4ab0;"></div>
<div class="a" style="left:47px;top:355px;width:4px;height:1px;background:#4a4ab0;"></div>
<div class="a" style="left:34px;top:357px;width:108px;height:6px;background:#d3e8fc;"></div>
<div class="a" style="left:34px;top:360px;width:87px;height:3px;background:#d8d8d8;"></div>
<div class="a" style="left:34px;top:363px;width:108px;height:5px;background:#fff;border:1px solid #777;border-right:none;"></div>
<div class="a" style="left:34px;top:365px;width:108px;height:1px;background:#888;"></div>
<div class="a" style="left:35px;top:361px;width:1px;height:1px;background:#111;"></div>
<div class="a" style="left:47px;top:359px;width:10px;height:2px;background:#777;"></div>
<div class="a" style="left:84px;top:359px;width:5px;height:1px;background:#444;"></div>
<div class="a" style="left:108px;top:359px;width:4px;height:1px;background:#444;"></div>
<div class="a" style="left:122px;top:359px;width:6px;height:1px;background:#444;"></div>
<div class="a" style="left:123px;top:361px;width:5px;height:1px;background:#444;"></div>
<div class="a" style="left:131px;top:361px;width:9px;height:1px;background:#444;"></div>
<div class="a" style="left:60px;top:367px;width:10px;height:1px;background:#333;"></div>
<div class="a" style="left:78px;top:367px;width:3px;height:1px;background:#333;"></div>
<div class="a" style="left:86px;top:367px;width:3px;height:1px;background:#333;"></div>
<div class="a" style="left:93px;top:367px;width:3px;height:1px;background:#333;"></div>
<div class="a" style="left:101px;top:367px;width:3px;height:1px;background:#333;"></div>
<div class="a" style="left:108px;top:367px;width:3px;height:1px;background:#333;"></div>
<div class="a" style="left:117px;top:367px;width:3px;height:1px;background:#333;"></div>
<div class="a" style="left:128px;top:367px;width:3px;height:1px;background:#f22;"></div>
<div class="a" style="left:137px;top:367px;width:5px;height:1px;background:#f22;"></div>
<div class="a" style="left:128px;top:364px;width:2px;height:1px;background:#f66;"></div>
<div class="a" style="left:138px;top:364px;width:3px;height:1px;background:#f66;"></div>
<div class="a" style="left:72px;top:367px;width:70px;height:2px;background:#444;"></div>
<div class="a" style="left:72px;top:370px;width:70px;height:2px;background:#444;"></div>
<div class="a" style="left:34px;top:369px;width:4px;height:1px;background:#555;"></div>
<div class="a" style="left:39px;top:369px;width:4px;height:1px;background:#555;"></div>
<div class="a" style="left:73px;top:372px;width:6px;height:1px;background:#555;"></div>
<div class="a" style="left:74px;top:374px;width:5px;height:1px;background:#777;"></div>
<div class="a" style="left:87px;top:372px;width:6px;height:1px;background:#555;"></div>
<div class="a" style="left:88px;top:374px;width:5px;height:1px;background:#777;"></div>
<div class="a" style="left:97px;top:372px;width:6px;height:1px;background:#555;"></div>
<div class="a" style="left:98px;top:374px;width:5px;height:1px;background:#777;"></div>
<div class="a" style="left:113px;top:372px;width:6px;height:1px;background:#555;"></div>
<div class="a" style="left:114px;top:374px;width:5px;height:1px;background:#777;"></div>
<div class="a" style="left:121px;top:372px;width:6px;height:1px;background:#555;"></div>
<div class="a" style="left:122px;top:374px;width:5px;height:1px;background:#777;"></div>
<div class="a" style="left:133px;top:372px;width:6px;height:1px;background:#555;"></div>
<div class="a" style="left:134px;top:374px;width:5px;height:1px;background:#777;"></div>
<div class="a" style="left:85px;top:388px;width:9px;height:1px;background:#4a4ab8;"></div>
<div class="a" style="left:22px;top:782px;width:1332px;height:19px;background:#efefef;"></div>
<div class="a" style="left:22px;top:782px;width:1332px;height:1px;background:#d8d8d8;"></div>
<div class="a" style="left:221px;top:783px;width:1px;height:17px;background:#cfcfcf;"></div>
<div class="a" style="left:787px;top:783px;width:1px;height:17px;background:#cfcfcf;"></div>
<div class="t " style="top:786.84px;font-size:12px;line-height:12px;color:#111;letter-spacing:-0.395px;left:24px;">Page 1 of 1</div>
<div class="a" style="left:0px;top:801px;width:1358px;height:40px;background:#5d5c5a;"></div>
<div class="a" style="left:18px;top:801px;width:1340px;height:5px;background:#4a4a48;"></div>
<div class="a" style="left:0px;top:803px;width:1358px;height:1px;background:#5a5a58;"></div>
<div class="a" style="left:5px;top:806px;width:1350px;height:33px;background:#bfbbb7;"></div>
<div class="a" style="left:77px;top:805px;width:1px;height:32px;background:#4a4948;"></div>
<div class="a" style="left:180px;top:805px;width:1px;height:32px;background:#4a4948;"></div>
<div class="a" style="left:942px;top:805px;width:1px;height:32px;background:#4a4948;"></div>
<div class="a" style="left:1035px;top:805px;width:1px;height:32px;background:#4a4948;"></div>
<div class="a" style="left:1128px;top:805px;width:1px;height:32px;background:#4a4948;"></div>
<div class="a" style="left:1181px;top:805px;width:1px;height:32px;background:#4a4948;"></div>
<div class="a" style="left:1254px;top:805px;width:1px;height:32px;background:#4a4948;"></div>
<div class="a" style="left:184px;top:808px;width:757px;height:28px;background:#e8791b;border:1px solid #9aa4ac;"></div>
<div class="a" style="left:1258px;top:808px;width:97px;height:28px;background:#05800c;"></div>
<svg class="a" style="left:17px;top:814px;" width="16" height="16" viewBox="0 0 16 16"><rect x="0.8" y="0.8" width="14.4" height="14.4" rx="2" fill="#b8b6b4" stroke="#7a7a7a" stroke-width="1.6"/><rect x="2.4" y="2.8" width="3.8" height="6" fill="#fff" stroke="#555" stroke-width="0.7"/><rect x="9.2" y="4.7" width="4.2" height="5.2" fill="#fff" stroke="#555" stroke-width="0.7"/><rect x="5.7" y="7.3" width="4.6" height="5.9" fill="#fff" stroke="#555" stroke-width="0.9"/></svg>
<div class="t " style="top:816.84px;font-size:12px;line-height:12px;color:#111;letter-spacing:-0.004px;left:37px;">Menu</div>
<svg class="a" style="left:116px;top:814px;" width="17" height="16" viewBox="0 0 17 16"><circle cx="8.5" cy="3" r="2.5" fill="#1a50d0"/><path d="M5.5 11 L8.5 5 L11.5 11 Z" fill="#1a50d0"/><circle cx="4" cy="8" r="2.3" fill="#d02020"/><path d="M0.5 15 L4 10 L7.5 15 Z" fill="#d02020"/><circle cx="13" cy="8" r="2.3" fill="#20a030"/><path d="M9.5 15 L13 10 L16.5 15 Z" fill="#20a030"/></svg>
<div class="t " style="top:816.84px;font-size:12px;line-height:12px;color:#111;left:137px;">A</div>
<svg class="a" style="left:450px;top:814px;" width="16" height="16" viewBox="0 0 16 16"><defs><linearGradient id="fxg2" x1="0" y1="0" x2="0" y2="1"><stop offset="0" stop-color="#c9d1d8"/><stop offset="1" stop-color="#f2f5f7"/></linearGradient></defs><rect x="0.2" y="0" width="15.6" height="15.6" rx="1.5" fill="url(#fxg2)"/><path d="M10 1.4 C9.3 0.2 7.6 0.2 6.9 1.8 L3.6 12.6 C3.1 14 2.1 14.6 1.1 14" stroke="#000" stroke-width="1.35" fill="none"/><path d="M2.4 5.6 L8.2 5.6" stroke="#000" stroke-width="1.2"/><path d="M7.6 12.6 L15.2 5.3 M9.2 5.3 L13.3 12.6" stroke="#ff1010" stroke-width="2"/></svg>
<div class="t " style="top:816.84px;font-size:12px;line-height:12px;color:#111;letter-spacing:0.359px;left:466px;">Enterprise : TurboSoft () - (fxDefault)</div>
<svg class="a" style="left:960px;top:815px;" width="14" height="14" viewBox="0 0 14 14"><rect x="0.5" y="0.5" width="13" height="13" rx="1.5" fill="#5a9ee8" stroke="#3a70b8"/><rect x="3" y="1" width="8" height="5.5" fill="#f4f8fc"/><rect x="4" y="2.5" width="6" height="0.8" fill="#9ab"/><rect x="4" y="4.3" width="6" height="0.8" fill="#9ab"/><rect x="3" y="8.5" width="8" height="5" fill="#1a1a1a"/><rect x="8" y="9.5" width="1.5" height="3" fill="#ddd"/></svg>
<div class="t " style="top:816.84px;font-size:12px;line-height:12px;color:#111;letter-spacing:-0.170px;left:979px;">Save All</div>
<svg class="a" style="left:1047px;top:815px;" width="16" height="15" viewBox="0 0 16 15"><rect x="0.5" y="1.5" width="13" height="13" fill="#f4a030" stroke="#d07a20"/><rect x="2.5" y="3.5" width="9" height="9" fill="#e8f0fa"/><path d="M4 4 L10 4 L10 12 L4 12 Z" fill="#7ab0e8"/><path d="M9 6 L14.5 1 M11.5 0.8 L14.8 0.8 L14.8 4" stroke="#e02020" stroke-width="1.6" fill="none"/></svg>
<div class="t " style="top:816.84px;font-size:12px;line-height:12px;color:#111;letter-spacing:0.094px;left:1066px;">Actions</div>
<svg class="a" style="left:1116px;top:820px;" width="9" height="5" viewBox="0 0 9 5"><path d="M0 0 L9 0 L4.5 5 Z" fill="#111"/></svg>
<svg class="a" style="left:1147px;top:812px;" width="18" height="19" viewBox="0 0 18 19"><rect x="1" y="2" width="12" height="15" rx="1" fill="#f5c040" stroke="#b08020"/><rect x="4" y="0.5" width="6" height="3" fill="#ddd" stroke="#888"/><path d="M8 8 L15 8 L17 10 L17 18 L8 18 Z" fill="#fff" stroke="#4a7fc0"/><rect x="10" y="11" width="5" height="1" fill="#4a7fc0"/><rect x="10" y="13" width="5" height="1" fill="#4a7fc0"/><rect x="10" y="15" width="5" height="1" fill="#4a7fc0"/></svg>
<svg class="a" style="left:1192px;top:814px;" width="17" height="14" viewBox="0 0 17 14"><path d="M1.5 7.5 L5 1.2 L9 7.5 Z" fill="#f5b060"/><rect x="1.7" y="6.6" width="12.2" height="5.4" fill="#f8d9a8"/><rect x="1.7" y="6.6" width="5" height="5.4" fill="#f0b070"/><rect x="3" y="8" width="2.6" height="4" fill="#1a9a1a"/><rect x="8.2" y="8" width="1.5" height="2" fill="#3a8ad8"/><rect x="11.3" y="8" width="1.5" height="2" fill="#3a8ad8"/><path d="M0 6 L4 1.3 L12 1.3 L16 6.5 L13.5 6.5 L10 2.6 L7 7 L5 3 L1.5 7 Z" fill="#d82a1a"/><path d="M4 1.3 L12 1.3 L15.5 6.3 L8 6.8 Z" fill="#e0301f"/><rect x="1.7" y="11.6" width="12.2" height="0.8" fill="#b07030"/></svg>
<div class="t " style="top:816.84px;font-size:12px;line-height:12px;color:#111;letter-spacing:-0.004px;left:1213px;">Home</div>
<svg class="a" style="left:1279px;top:810px;" width="23" height="23" viewBox="0 0 23 23"><defs><linearGradient id="dbg" x1="0" y1="0" x2="1" y2="0"><stop offset="0" stop-color="#c4c8cc"/><stop offset="0.4" stop-color="#f2f4f6"/><stop offset="1" stop-color="#b8bcc0"/></linearGradient></defs><rect x="0" y="3" width="17" height="15.5" fill="url(#dbg)"/><ellipse cx="8.5" cy="18.5" rx="8.5" ry="2.5" fill="#c8ccd0"/><path d="M0 8 A8.5 2.5 0 0 0 17 8 M0 13 A8.5 2.5 0 0 0 17 13" stroke="#9aa0a6" stroke-width="0.9" fill="none"/><ellipse cx="8.5" cy="3" rx="8.5" ry="3" fill="#eef0f2" stroke="#b0b4b8" stroke-width="0.6"/><ellipse cx="8.5" cy="3.3" rx="6" ry="1.8" fill="#d4d8dc"/><path d="M14 11 L20 17 L17.5 20.5 C15 21 12 19 10.5 16 Z" fill="#6ab0f0" stroke="#4a8ad0" stroke-width="0.6"/><path d="M13 12.5 L18.5 18" stroke="#a8d4fa" stroke-width="0.8"/><path d="M16 10.5 L18.5 8 M19 13.5 L21.5 11" stroke="#b8b8b8" stroke-width="1.4"/><path d="M11 19 L8 22" stroke="#c8c8c8" stroke-width="1.4"/></svg>
<div class="t " style="top:816.84px;font-size:12px;line-height:12px;color:#fff;letter-spacing:-0.115px;left:1301px;">Online</div>
</body></html>
